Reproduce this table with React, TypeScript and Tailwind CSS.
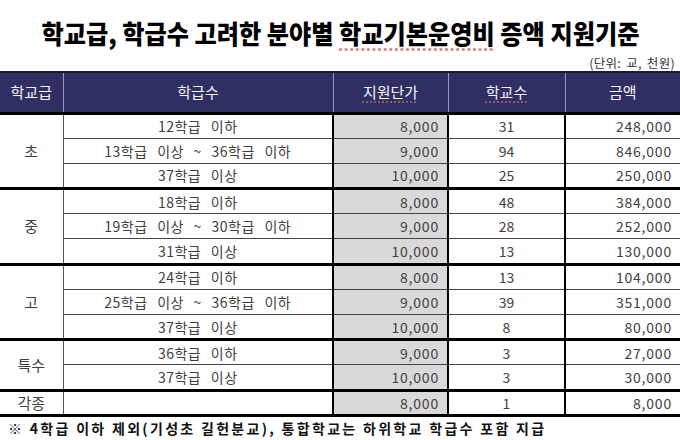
import React from "react";

type Row = { cls: string; unit: string; cnt: string; amt: string };
type Group = { name: string; rows: Row[] };

const groups: Group[] = [
  {
    name: "초",
    rows: [
      { cls: "12학급 이하", unit: "8,000", cnt: "31", amt: "248,000" },
      { cls: "13학급 이상 ~ 36학급 이하", unit: "9,000", cnt: "94", amt: "846,000" },
      { cls: "37학급 이상", unit: "10,000", cnt: "25", amt: "250,000" },
    ],
  },
  {
    name: "중",
    rows: [
      { cls: "18학급 이하", unit: "8,000", cnt: "48", amt: "384,000" },
      { cls: "19학급 이상 ~ 30학급 이하", unit: "9,000", cnt: "28", amt: "252,000" },
      { cls: "31학급 이상", unit: "10,000", cnt: "13", amt: "130,000" },
    ],
  },
  {
    name: "고",
    rows: [
      { cls: "24학급 이하", unit: "8,000", cnt: "13", amt: "104,000" },
      { cls: "25학급 이상 ~ 36학급 이하", unit: "9,000", cnt: "39", amt: "351,000" },
      { cls: "37학급 이상", unit: "10,000", cnt: "8", amt: "80,000" },
    ],
  },
  {
    name: "특수",
    rows: [
      { cls: "36학급 이하", unit: "9,000", cnt: "3", amt: "27,000" },
      { cls: "37학급 이상", unit: "10,000", cnt: "3", amt: "30,000" },
    ],
  },
  {
    name: "각종",
    rows: [{ cls: "", unit: "8,000", cnt: "1", amt: "8,000" }],
  },
];

export default function App() {
  return (
    <div className="w-[680px] h-[440px] bg-white overflow-hidden font-['Noto_Sans_CJK_KR',sans-serif] text-[#404040]">
      <div className="pt-[16px] h-[54px] text-center">
        <span className="inline-block scale-x-[0.93] text-[26px] leading-[34px] font-black text-black whitespace-nowrap">
          학교급, 학급수 고려한 분야별{" "}
          <span className="underline decoration-dotted decoration-[#d08080] underline-offset-[4px]">학교기본운영비</span> 증액 지원기준
        </span>
      </div>
      <div className="text-right pr-[5px] text-[12.5px] leading-[17px] text-[#333] tracking-[0.3px] [word-spacing:2px]">
        (단위: 교, 천원)
      </div>
      <table className="w-[680px] border-collapse table-fixed text-[14px]">
        <colgroup>
          <col className="w-[63px]" />
          <col className="w-[270px]" />
          <col className="w-[115px]" />
          <col className="w-[117px]" />
          <col className="w-[115px]" />
        </colgroup>
        <thead>
          <tr className="h-[41px] bg-[#2f2f63] text-[#f4f4f8] text-[15px] border-t-2 border-t-[#1a1a3a] border-b-[3px] border-b-black">
            <th className="font-normal">학교급</th>
            <th className="font-normal border-l border-l-[#9a9ac0]">학급수</th>
            <th className="font-normal border-l border-l-[#9a9ac0]">
              <span className="underline decoration-dotted decoration-[#c06070] underline-offset-[4px]">지원단가</span>
            </th>
            <th className="font-normal border-l border-l-[#9a9ac0]">
              <span className="underline decoration-dotted decoration-[#c06070] underline-offset-[4px]">학교수</span>
            </th>
            <th className="font-normal border-l border-l-[#9a9ac0]">금액</th>
          </tr>
        </thead>
        <tbody>
          {groups.map((g, gi) =>
            g.rows.map((r, ri) => (
              <tr
                key={gi + "-" + ri}
                className={
                  "h-[25.2px] " +
                  (ri === 0
                    ? gi === 0
                      ? ""
                      : "border-t-[3px] border-t-black"
                    : "border-t border-t-[#444]") +
                  (gi === groups.length - 1 ? " border-b-[3px] border-b-black" : "")
                }
              >
                {ri === 0 && (
                  <td rowSpan={g.rows.length} className="text-center text-[15px] leading-[20px] p-0">
                    {g.name}
                  </td>
                )}
                <td className="text-center leading-[20px] p-0 border-l border-l-[#555] tracking-[0.5px] [word-spacing:6px]">
                  {r.cls}
                </td>
                <td className="text-right pr-[8px] leading-[20px] bg-[#d9d9d9] border-l-2 border-l-black tracking-[0.8px]">
                  {r.unit}
                </td>
                <td className="text-center leading-[20px] border-l-2 border-l-black">{r.cnt}</td>
                <td className="text-right pr-[8px] leading-[20px] border-l-2 border-l-black tracking-[0.8px]">
                  {r.amt}
                </td>
              </tr>
            ))
          )}
        </tbody>
      </table>
      <div className="pl-[8px] pt-[3px] text-[14px] leading-[17px] font-bold text-[#111] tracking-[2.3px] whitespace-nowrap">
        ※ 4학급 이하 제외(기성초 길헌분교), 통합학교는 하위학교 학급수 포함 지급
      </div>
    </div>
  );
}
